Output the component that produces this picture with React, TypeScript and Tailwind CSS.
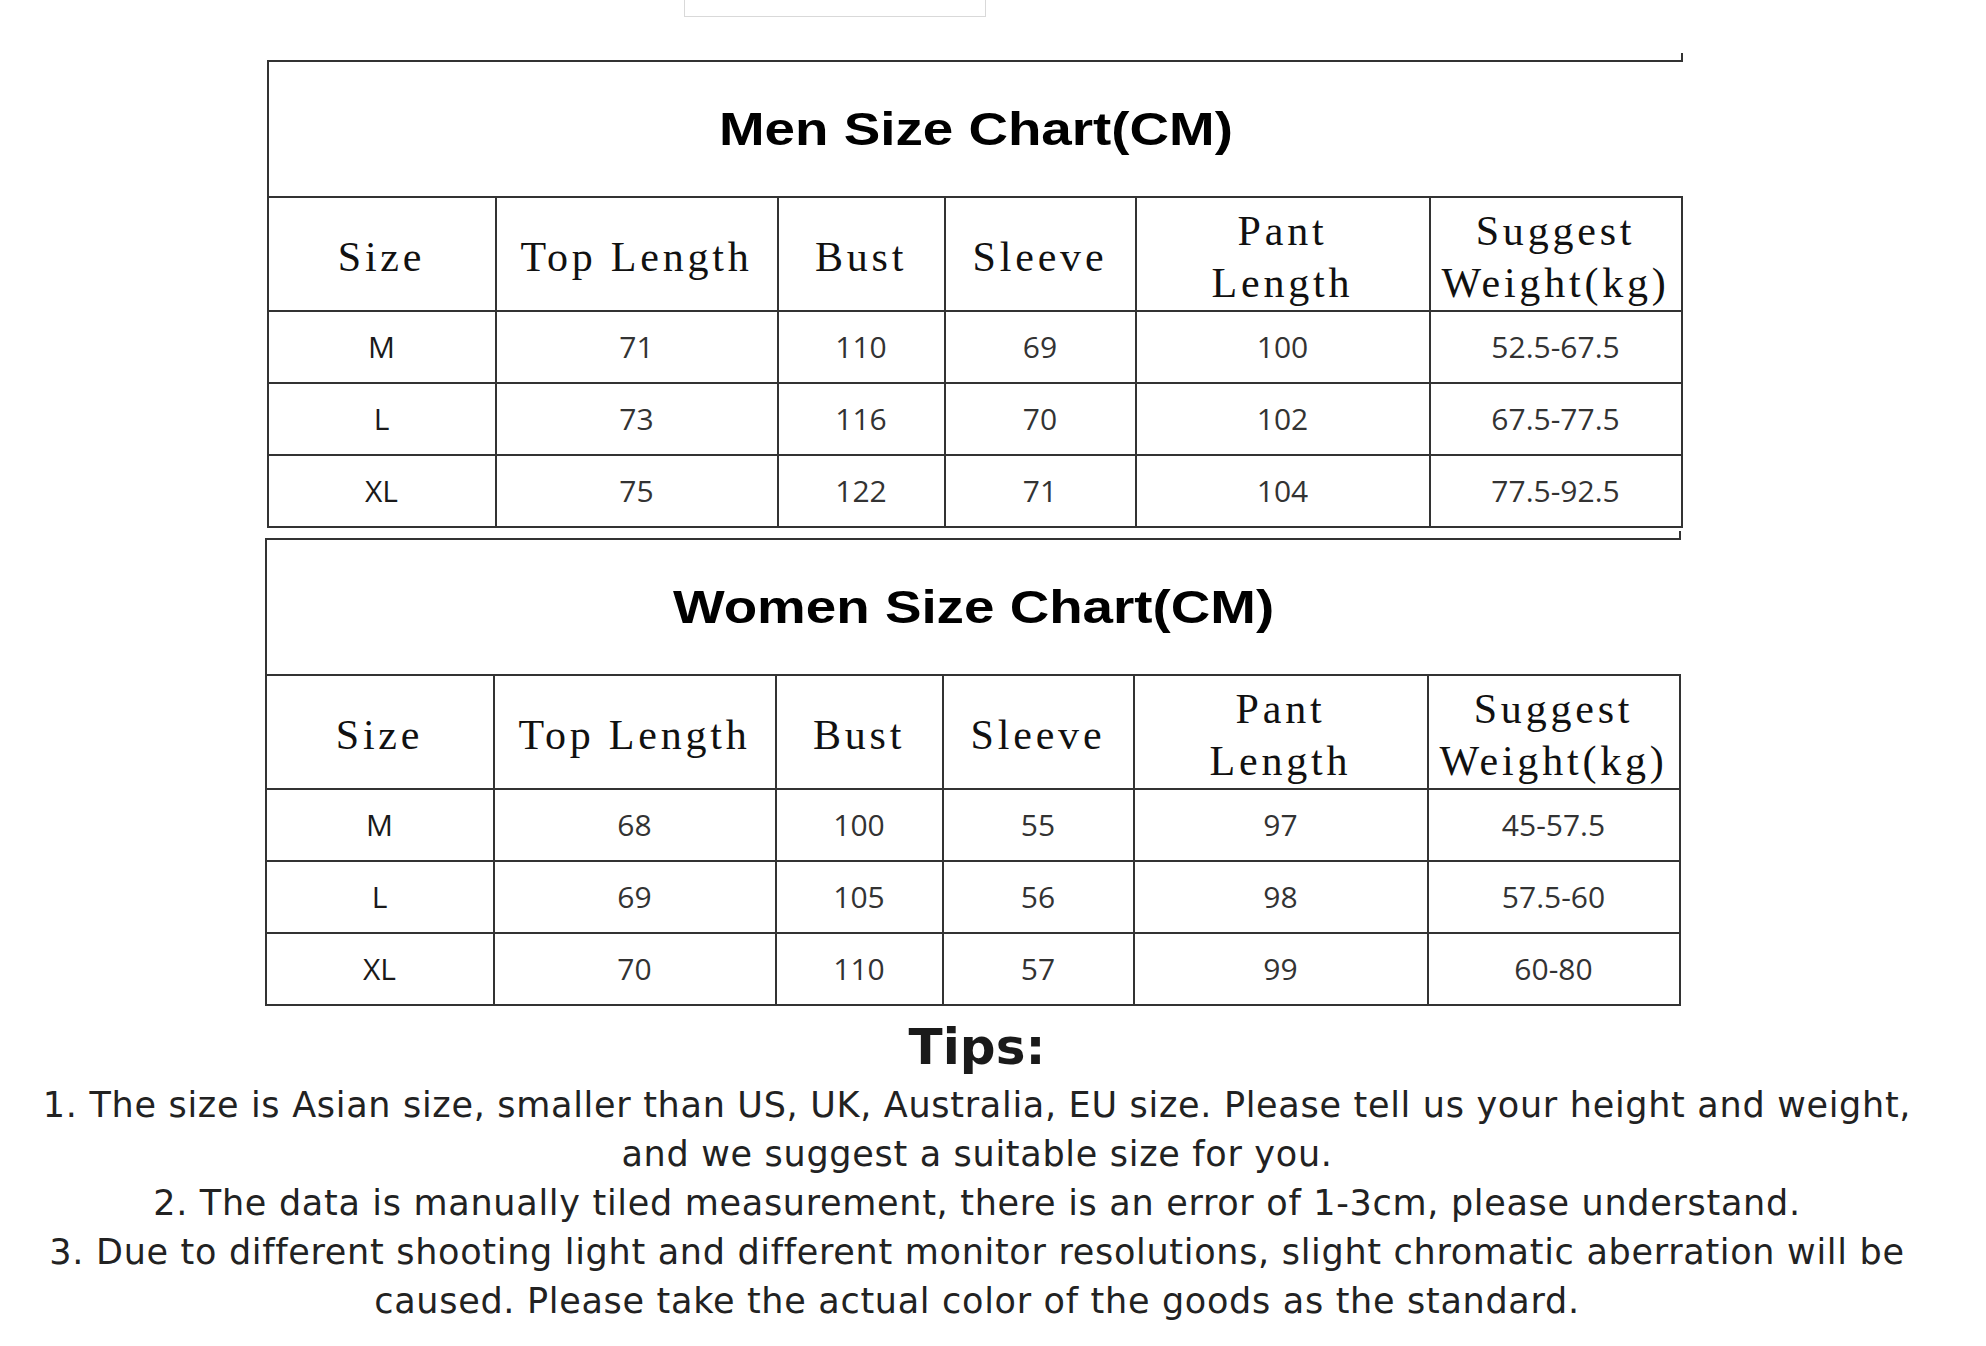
import React from 'react';

const gridCols = 'grid grid-cols-[228px_282px_167px_191px_294px_252px]';

const menRows = [
  ['M', '71', '110', '69', '100', '52.5-67.5'],
  ['L', '73', '116', '70', '102', '67.5-77.5'],
  ['XL', '75', '122', '71', '104', '77.5-92.5'],
];

const womenRows = [
  ['M', '68', '100', '55', '97', '45-57.5'],
  ['L', '69', '105', '56', '98', '57.5-60'],
  ['XL', '70', '110', '57', '99', '60-80'],
];

function HeaderRow() {
  const heads: React.ReactNode[] = [
    'Size',
    'Top Length',
    'Bust',
    'Sleeve',
    <>Pant<br />Length</>,
    <>Suggest<br />Weight(kg)</>,
  ];
  return (
    <div className={`${gridCols} h-[114px] border-t-2 border-[#333]`}>
      {heads.map((h, i) => (
        <div
          key={i}
          className="flex items-center justify-center border-r-2 border-[#333] pt-[5px] text-center font-['Liberation_Serif',serif] text-[42px] leading-[52px] tracking-[3.8px] text-[#111]"
        >
          <span>{h}</span>
        </div>
      ))}
    </div>
  );
}

function SizeTable({ title, rows }: { title: string; rows: string[][] }) {
  return (
    <div className="w-[1416px] border-l-2 border-[#333]">
      <div className="relative flex h-[136px] items-center justify-center border-t-2 border-[#333]">
        <span className="absolute -top-[9px] right-0 h-[8px] w-[2px] bg-[#333]" />
        <h2 className="inline-block scale-x-[1.19] font-['Liberation_Sans',Arial,sans-serif] text-[46px] font-bold leading-none text-black">
          {title}
        </h2>
      </div>
      <HeaderRow />
      {rows.map((row, r) => (
        <div
          key={r}
          className={`${gridCols} border-t-2 border-[#333] ${r === rows.length - 1 ? 'h-[74px] border-b-2' : 'h-[72px]'}`}
        >
          {row.map((cell, c) => (
            <div
              key={c}
              className={`flex items-center justify-center border-r-2 border-[#333] font-['Open_Sans',sans-serif] text-[30px] leading-none ${c === 0 ? 'text-[#1a1a1a]' : 'text-[#333]'}`}
            >
              {cell}
            </div>
          ))}
        </div>
      ))}
    </div>
  );
}

export default function App() {
  return (
    <div className="min-h-screen w-[1986px] bg-white">
      <div className="flex w-[1954px] flex-col items-center">
        <div className="ml-[684px] h-[17px] w-[302px] self-start border border-t-0 border-[#d9d9d9]" />

        <div className="mt-[43px] mr-[5px]">
          <SizeTable title="Men Size Chart(CM)" rows={menRows} />
        </div>

        <div className="mt-[10px] mr-[9px]">
          <SizeTable title="Women Size Chart(CM)" rows={womenRows} />
        </div>

        <h3 className="mt-[11px] font-['DejaVu_Sans',Verdana,sans-serif] text-[50px] font-bold leading-[60px] text-[#1a1a1a]">
          Tips:
        </h3>

        <div className="mt-[4px] text-center font-['DejaVu_Sans',Verdana,sans-serif] text-[35px] leading-[49px] tracking-[0.7px] text-[#222]">
          <p className="whitespace-nowrap">
            1. The size is Asian size, smaller than US, UK, Australia, EU size. Please tell us your height and weight,
            <br />
            and we suggest a suitable size for you.
          </p>
          <p className="whitespace-nowrap">
            2. The data is manually tiled measurement, there is an error of 1-3cm, please understand.
          </p>
          <p className="whitespace-nowrap">
            3. Due to different shooting light and different monitor resolutions, slight chromatic aberration will be
            <br />
            caused. Please take the actual color of the goods as the standard.
          </p>
        </div>
      </div>
    </div>
  );
}
